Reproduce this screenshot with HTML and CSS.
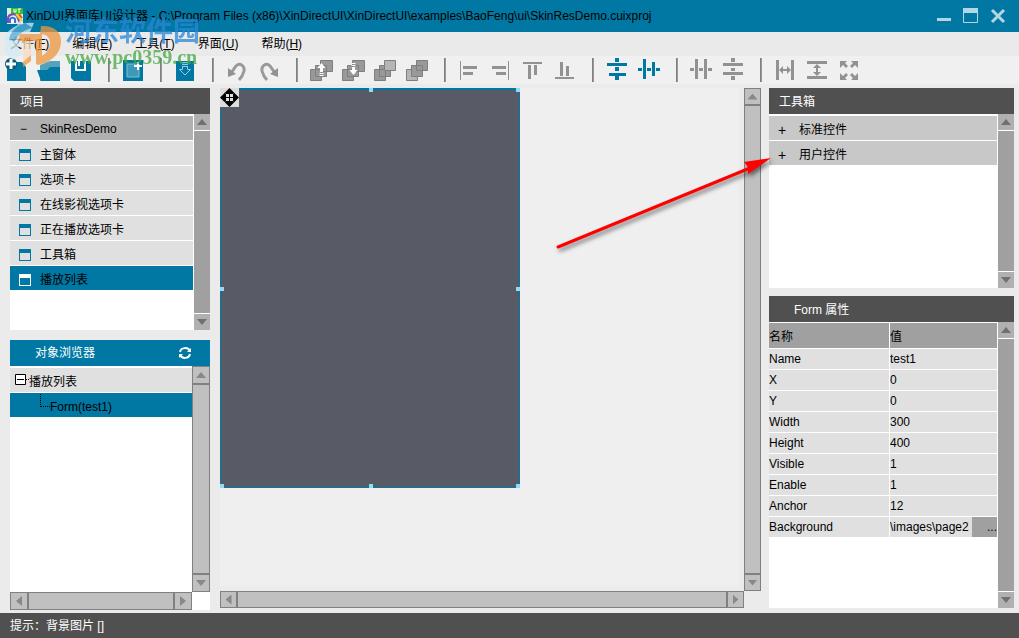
FILE: index.html
```html
<!DOCTYPE html>
<html lang="zh-CN">
<head>
<meta charset="utf-8">
<title>XinDUI界面库UI设计器</title>
<link rel="stylesheet" href="styles.css">
</head>
<body>
<div class="app">
  <header class="titlebar">
    <svg class="app-icon" width="16" height="16" viewBox="0 0 16 16" aria-hidden="true">
      <rect width="16" height="16" fill="#dff0d8"/><rect x="4" width="12" height="6" fill="#2fc22f"/>
      <path d="M7 1v3h2V1M12 1v4M11 1h3" stroke="#fff" fill="none"/>
      <path d="M1 15V10a5 4 0 0 1 9-2l3 7" stroke="#8a3fc0" stroke-width="2" fill="none"/>
      <path d="M3 15v-4a3 3 0 0 1 5 0v4" stroke="#3a6fe0" stroke-width="2" fill="#fff"/>
      <path d="M9 6l6 7" stroke="#e8d020" stroke-width="2"/><path d="M12 6l3 4" stroke="#e85020" stroke-width="2"/>
    </svg>
    <h1 class="title">XinDUI界面库UI设计器 - C:\Program Files (x86)\XinDirectUI\XinDirectUI\examples\BaoFeng\ui\SkinResDemo.cuixproj</h1>
    <div class="window-buttons">
      <button aria-label="最小化"><svg width="16" height="16"><path d="M1 10h14v3H1z" fill="#b2d7e4"/></svg></button>
      <button aria-label="最大化"><svg width="16" height="16"><path d="M.5.5h14v14H.5z" fill="none" stroke="#b2d7e4"/><path d="M0 0h15v5H0z" fill="#b2d7e4"/></svg></button>
      <button aria-label="关闭"><svg width="16" height="16"><path d="M2 2l12 12M14 2L2 14" stroke="#b2d7e4" stroke-width="3"/></svg></button>
    </div>
  </header>
  <nav class="menubar">
    <button>文件(<u>F</u>)</button><button>编辑(<u>E</u>)</button><button>工具(<u>T</u>)</button><button>界面(<u>U</u>)</button><button>帮助(<u>H</u>)</button>
  </nav>
  <div class="toolbar" role="toolbar" aria-label="工具栏">
    <button aria-label="新建"><svg class="blue" viewBox="0 0 32 28"><path d="M6 6h15l4 5v14H6z"/><circle cx="10" cy="8" r="6" fill="#075a7c"/><path d="M10 3v10M5 8h10" stroke="#fff" stroke-width="3"/></svg></button>
    <button aria-label="打开"><svg class="blue" viewBox="0 0 32 28"><path d="M7 9l10-4h10v20H7z" opacity=".65"/><path d="M4 14h10l3-3h10v14H8z"/></svg></button>
    <button aria-label="保存"><svg class="blue" viewBox="0 0 32 28"><path d="M6 5h20v20H9l-3-3z"/><path d="M11 5v9h9V5" fill="none" stroke="#fff" stroke-width="2"/><path d="M13 5h2v5h-2z" fill="#fff"/></svg></button>
    <span class="sep"></span>
    <button aria-label="新建窗体"><svg class="blue" viewBox="0 0 32 28"><path d="M6 4h20v21H6z"/><path d="M10 8h12v13H10z" fill="#3e98b8" stroke="#86bed0"/><path d="M21 6v8M17 10h8" stroke="#fff" stroke-width="2"/></svg></button>
    <span class="sep"></span>
    <button aria-label="导入"><svg class="blue" viewBox="0 0 32 28"><path d="M7 5h18v20H7z"/><path d="M13 6.500h6M13 8.500h6M13 10.500h6M13.500 10.500v3h-3l5.500 5.500 5.500-5.500h-3v-3" fill="none" stroke="#91cbe0"/></svg></button>
    <span class="sep"></span>
    <button aria-label="撤销"><svg viewBox="0 0 32 28"><path d="M10 17l5-7c4-4 9 0 8 5-1 4-2 6-5 9" fill="none" stroke="#999" stroke-width="3"/><path d="M7 12v9l8-3z"/></svg></button>
    <button aria-label="重做"><svg viewBox="0 0 32 28"><path d="M22 17l-5-7c-4-4-9 0-8 5 1 4 2 6 5 9" fill="none" stroke="#999" stroke-width="3"/><path d="M25 12v9l-8-3z"/></svg></button>
    <span class="sep"></span>
    <button aria-label="上移一层"><svg class="layers" viewBox="0 0 32 28"><path d="M15.500 4.500h12v11h-12zM10.500 9.500h11v11h-11zM5.500 13.500h11v11h-11z"/><path class="light" d="M16.500 7l4 5h-2.500v4h-3v-4h-2.500zM14.500 17h4v1h-4zM14.500 19h4v1h-4z"/></svg></button>
    <button aria-label="下移一层"><svg class="layers" viewBox="0 0 32 28"><path d="M15.500 4.500h12v11h-12zM10.500 9.500h11v11h-11zM5.500 13.500h11v11h-11z"/><path class="light" d="M16.500 19l4-5h-2.500v-3h-3v3h-2.500zM14.500 7h4v1h-4zM14.500 9h4v1h-4z"/></svg></button>
    <button aria-label="置顶"><svg class="layers" viewBox="0 0 32 28"><path d="M5.500 13.500h11v11h-11zM10.500 9.500h11v11h-11z"/><path fill="#b5b5b5" d="M15.500 4.500h11v10h-11z"/></svg></button>
    <button aria-label="置底"><svg class="layers" viewBox="0 0 32 28"><path fill="#b5b5b5" d="M5.500 13.500h11v11h-11z"/><path d="M10.500 9.500h11v11h-11zM15.500 4.500h11v10h-11z"/></svg></button>
    <span class="sep"></span>
    <button aria-label="左对齐"><svg viewBox="0 0 32 28"><path d="M7 5h1v19H7zM10 10h14v3H10zM10 16h10v3H10z"/></svg></button>
    <button aria-label="右对齐"><svg viewBox="0 0 32 28"><path d="M23 5h1v19h-1zM7 10h14v3H7zM11 16h10v3H11z"/></svg></button>
    <button aria-label="顶对齐"><svg viewBox="0 0 32 28"><path d="M6 6h19v2H6zM11 9h3v14h-3zM17 9h3v10h-3z"/></svg></button>
    <button aria-label="底对齐"><svg viewBox="0 0 32 28"><path d="M6 21h19v2H6zM11 6h3v14h-3zM17 10h3v10h-3z"/></svg></button>
    <span class="sep"></span>
    <button aria-label="水平居中"><svg class="blue" viewBox="0 0 32 28"><path d="M6 7h20v3H6zM8 17h17v3H8zM14 2h4v4h-4zM14 11h4v4h-4zM14 20h4v4h-4z"/></svg></button>
    <button aria-label="垂直居中"><svg class="blue" viewBox="0 0 32 28"><path d="M10 3h3v20h-3zM19 6h3v14h-3zM5 12h4v3H5zM14 12h4v3h-4zM23 12h4v3h-4z"/></svg></button>
    <span class="sep"></span>
    <button aria-label="水平等距"><svg viewBox="0 0 32 28"><path d="M10 3h3v20h-3zM19 3h3v20h-3zM5 12h4v3H5zM14 12h4v3h-4zM23 12h4v3h-4z"/></svg></button>
    <button aria-label="垂直等距"><svg viewBox="0 0 32 28"><path d="M6 7h20v3H6zM6 16h20v3H6zM14 2h4v4h-4zM14 12h4v3h-4zM14 20h4v4h-4z"/></svg></button>
    <span class="sep"></span>
    <button aria-label="等宽"><svg viewBox="0 0 32 28"><path d="M7 4h3v20H7zM22 4h3v20h-3zM10 14l4-4v3h4v-3l4 4-4 4v-3h-4v3z"/></svg></button>
    <button aria-label="等高"><svg viewBox="0 0 32 28"><path d="M6 5h20v3H6zM6 20h20v3H6zM16 8l4 4h-3v4h3l-4 4-4-4h3v-4h-3z"/></svg></button>
    <button aria-label="等大小"><svg viewBox="0 0 32 28"><path d="M7 5h7l-2 2 3 3-2 2-3-3-3 3zM25 5h-7l2 2-3 3 2 2 3-3 3 3zM7 24h7l-2-2 3-3-2-2-3 3-3-3zM25 24h-7l2-2-3-3 2-2 3 3 3-3z"/></svg></button>
  </div>

  <main class="workspace">
    <div class="column left">
      <section class="panel project">
        <h2 class="panel-head">项目</h2>
        <div class="panel-body">
          <ul class="list">
            <li class="root"><span class="mark">−</span>SkinResDemo</li>
            <li><i class="win"></i>主窗体</li>
            <li><i class="win"></i>选项卡</li>
            <li><i class="win"></i>在线影视选项卡</li>
            <li><i class="win"></i>正在播放选项卡</li>
            <li><i class="win"></i>工具箱</li>
            <li class="selected"><i class="win"></i>播放列表</li>
          </ul>
          <div class="flatbar"><button class="up" aria-label="向上"></button><span class="track"></span><button class="down" aria-label="向下"></button></div>
        </div>
      </section>
      <section class="panel objects">
        <h2 class="panel-head indent active">对象浏览器
          <button class="refresh" aria-label="刷新"><svg width="14" height="14" viewBox="0 0 14 14"><path d="M2 6c1-5 8-5 10-1M12 8c-1 5-8 5-10 1" fill="none" stroke="#fff" stroke-width="2"/><path d="M13 2v4H9zM1 12V8h4z" fill="#fff"/></svg></button>
        </h2>
        <div class="scroll-grid">
          <ul class="list tree">
            <li><svg width="19" height="24" aria-hidden="true"><path d="M5.500 6.500h10v10h-10z" fill="#fff" stroke="#000"/><path d="M7 11.500h7" stroke="#000"/><path d="M16 11.500h3" stroke="#000" stroke-dasharray="1"/></svg>播放列表</li>
            <li class="selected"><svg width="40" height="24" aria-hidden="true"><path d="M30.500 1v13M31 13.500h9" fill="none" stroke="#000" stroke-dasharray="1"/></svg>Form(test1)</li>
          </ul>
          <div class="bar vertical"><button class="up" aria-label="向上"></button><span class="thumb"></span><button class="down" aria-label="向下"></button></div>
          <div class="bar horizontal"><button class="prev" aria-label="向左"></button><span class="thumb"></span><button class="next" aria-label="向右"></button></div>
        </div>
      </section>
    </div>

    <section class="scroll-grid editor" aria-label="编辑区">
      <div class="canvas">
        <div class="form">
          <svg class="mover" width="19" height="19" viewBox="0 0 19 19"><path d="M0 0h19v19H0z" fill="#ddd"/><path d="M9.500 0l5 5h-10zM9.500 19l5-5h-10zM0 9.500l5-5v10zM19 9.500l-5-5v10z"/><path d="M5.500 5.500h8v8h-8zM9.500 4v11M4 9.500h11" fill="none" stroke="#000"/></svg>
          <i class="grip n"></i><i class="grip ne"></i><i class="grip w"></i><i class="grip e"></i><i class="grip sw"></i><i class="grip s"></i><i class="grip se"></i>
        </div>
      </div>
      <div class="bar vertical"><button class="up" aria-label="向上"></button><span class="thumb"></span><button class="down" aria-label="向下"></button></div>
      <div class="bar horizontal"><button class="prev" aria-label="向左"></button><span class="thumb"></span><button class="next" aria-label="向右"></button></div>
    </section>

    <div class="column right">
      <section class="panel toolbox">
        <h2 class="panel-head">工具箱</h2>
        <div class="panel-body">
          <ul class="list groups">
            <li><span class="mark">+</span>标准控件</li>
            <li><span class="mark">+</span>用户控件</li>
          </ul>
          <div class="flatbar"><button class="up" aria-label="向上"></button><span class="track"></span><button class="down" aria-label="向下"></button></div>
        </div>
      </section>
      <section class="panel properties">
        <h2 class="panel-head indent">Form 属性</h2>
        <div class="panel-body">
          <div class="table-area">
            <table>
              <thead><tr><th>名称</th><th>值</th></tr></thead>
              <tbody>
                <tr><td>Name</td><td>test1</td></tr>
                <tr><td>X</td><td>0</td></tr>
                <tr><td>Y</td><td>0</td></tr>
                <tr><td>Width</td><td>300</td></tr>
                <tr><td>Height</td><td>400</td></tr>
                <tr><td>Visible</td><td>1</td></tr>
                <tr><td>Enable</td><td>1</td></tr>
                <tr><td>Anchor</td><td>12</td></tr>
                <tr><td>Background</td><td><div class="file-cell"><span>\images\page2</span><button aria-label="浏览">...</button></div></td></tr>
              </tbody>
            </table>
          </div>
          <div class="flatbar"><button class="up" aria-label="向上"></button><span class="track"></span><button class="down" aria-label="向下"></button></div>
        </div>
      </section>
    </div>
  </main>
  <footer class="status">提示：背景图片 []</footer>

  <div class="watermark" aria-hidden="true">
    <svg width="60" height="48" viewBox="0 0 60 48">
      <path d="M29 3A27 21 0 0 0 8 40L17 34A17 14 0 0 1 25 12z" fill="#d5ebf5"/>
      <path d="M4 20A25 20 0 0 1 20 3l8 5c-8 1-15 6-18 13z" fill="#55abd5"/>
      <path d="M36 6c13-1 21 6 20 17-1 12-11 20-24 22l-1-7c9-2 14-8 14-15 0-6-4-9-10-9z" fill="#ee963f"/>
      <path d="M15 14h22v27l-6 3V21h-5v20l-8 6V21h-5z" fill="#ee963f"/>
      <path d="M18 21h8v14l-8 7z" fill="#f8dcc0"/>
      <path d="M15 0l-3 5 7-1z" fill="#d9eef8"/>
    </svg>
    <div class="watermark-text"><span class="wm-name">河东软件园</span><span class="wm-url">www.pc0359.cn</span></div>
  </div>
  <svg class="pointer" width="230" height="110" viewBox="0 0 230 110" aria-hidden="true">
    <path d="M8 97L200 18" stroke="#f00" stroke-width="3" stroke-linecap="round"/><path d="M221 8l-27 4 4 5v7z" fill="#f00"/>
  </svg>
</div>
</body>
</html>
```
FILE: styles.css
```css
* { box-sizing: border-box; }
body {
  margin: 0;
  font: 12px/16px "Liberation Sans", "Noto Sans CJK SC", sans-serif;
  color: #000;
}
button { margin: 0; padding: 0; border: 0; background: none; color: inherit; font: inherit; }
h1, h2, ul { margin: 0; padding: 0; font: inherit; list-style: none; }
.app { position: relative; display: flex; flex-direction: column; height: 100vh; overflow: hidden; background: #ebebeb; }

.titlebar { display: flex; align-items: center; height: 32px; padding: 0 13px 0 7px; background: #0078a3; flex: none; }
.title { flex: 1; margin-left: 3px; white-space: nowrap; overflow: hidden; }
.window-buttons { display: flex; gap: 11px; }
.window-buttons svg { display: block; }

.menubar { display: flex; gap: 23px; height: 24px; padding-left: 10px; background: #eaeaea; flex: none; }

.toolbar { display: flex; height: 28px; padding-left: 1px; background: #f0f0f0; flex: none; }
.toolbar button { width: 32px; height: 28px; flex: none; }
.toolbar svg { display: block; width: 32px; height: 28px; fill: #929292; }
.toolbar .blue { fill: #0078a3; }
.toolbar .layers { fill: #999; stroke: #7f7f7f; }
.toolbar .light { fill: #fff; stroke: none; }
.sep { flex: none; width: 2px; margin: 2px 7px 2px 11px; background: #999; border-left: 1px solid #808080; }

.workspace { flex: 1; min-height: 0; display: grid; grid-template-columns: 200px 1fr 253px; padding: 4px 5px 3px 10px; }
.column { display: flex; flex-direction: column; min-height: 0; }
.left { gap: 10px; }
.right { gap: 8px; margin-left: 8px; padding-bottom: 2px; }
.panel { display: flex; flex-direction: column; background: #fff; }
.project { height: 242px; }
.toolbox { height: 200px; }
.objects, .properties { flex: 1; min-height: 0; }
.panel-head { display: flex; align-items: center; justify-content: space-between; flex: none; height: 26px; padding: 2px 18px 0 10px; background: #505050; color: #fff; }
.panel-head.indent { padding-left: 25px; }
.panel-head.active { padding-top: 0; background: #0078a3; }
.refresh, .refresh svg { display: block; }
.panel-body { flex: 1; min-height: 0; display: flex; }

.list { flex: 1; min-width: 0; display: flex; flex-direction: column; gap: 1px; padding: 2px 1px 0 0; background: #fff; }
.list li { display: flex; align-items: center; height: 24px; padding-top: 3px; background: #e0e0e0; }
.list .root { padding-top: 2px; background: #b0b0b0; }
.list .selected { background: #0078a3; }
.groups li { background: #c8c8c8; }
.mark { width: 30px; padding-left: 10px; flex: none; }
.groups .mark { font-size: 14px; padding-left: 9px; }
.win { width: 12px; height: 12px; margin: 0 9px; border: 1px solid #0078a3; border-top-width: 4px; flex: none; }
.selected .win { border-color: #fff; }
.tree { padding-right: 0; }
.tree svg { margin-top: -3px; flex: none; }

.up::before, .down::before, .prev::before, .next::before { content: ""; display: block; width: 10px; height: 6px; margin: auto; background: #707070; }
.up::before { clip-path: polygon(50% 0, 100% 100%, 0 100%); }
.down::before { clip-path: polygon(0 0, 100% 0, 50% 100%); }
.bar button::before { background: #888; }
.bar .prev::before, .bar .next::before { width: 6px; height: 10px; }
.prev::before { clip-path: polygon(0 50%, 100% 0, 100% 100%); }
.next::before { clip-path: polygon(0 0, 100% 50%, 0 100%); }

.flatbar { display: flex; flex-direction: column; gap: 1px; width: 16px; flex: none; }
.flatbar button { height: 16px; background: #b0b0b0; }
.track { flex: 1; background: #a0a0a0; }

.scroll-grid { flex: 1; min-height: 0; display: grid; grid-template: 1fr 18px / 1fr 18px; }
.bar { display: flex; }
.vertical { flex-direction: column; }
.bar button, .thumb { border: 1px solid #808080; background: #c0c0c0; }
.bar button { flex: none; width: 18px; height: 18px; }
.thumb { flex: 1; }

.editor { grid-template: 1fr 17px / 1fr 17px; margin-left: 10px; padding-bottom: 2px; }
.editor .bar button { width: 17px; height: 17px; }
.canvas { margin: 0 5px 5px 0; background: #efefef; overflow: hidden; }
.form { position: relative; width: 300px; height: 400px; border: 1px solid #0078a3; border-top-width: 2px; background: #585b66; }
.mover { position: absolute; top: -2px; left: -1px; }
.grip { position: absolute; width: 4px; height: 4px; background: #8fdcf8; }
.n { top: -2px; left: calc(50% - 1px); }
.ne { top: -2px; right: -1px; }
.w { top: calc(50% - 2px); left: -1px; }
.e { top: calc(50% - 2px); right: -1px; }
.sw { bottom: -1px; left: -1px; }
.s { bottom: -1px; left: calc(50% - 1px); }
.se { bottom: -1px; right: -1px; }

.table-area { flex: 1; min-width: 0; }
table { width: 100%; table-layout: fixed; border-collapse: separate; border-spacing: 0; }
th, td { height: 21px; padding: 0; border: 0 solid #fff; border-width: 0 1px 1px 0; background: #e0e0e0; font-weight: normal; text-align: left; line-height: 20px; white-space: nowrap; overflow: hidden; }
th { height: 27px; border-top-width: 1px; padding-top: 2px; background: #a0a0a0; }
th:first-child { width: 121px; }
.file-cell { display: flex; height: 20px; }
.file-cell span { flex: 1; min-width: 0; overflow: hidden; }
.file-cell button { width: 25px; background: #a0a0a0; text-align: right; }

.status { flex: none; height: 25px; padding: 5px 10px; background: #505050; color: #fff; }

.watermark { position: absolute; top: 20px; left: 5px; display: flex; opacity: .75; pointer-events: none; }
.watermark-text { display: flex; flex-direction: column; font-family: "Liberation Serif", "Noto Sans CJK SC", serif; font-weight: bold; white-space: nowrap; }
.wm-name { font-size: 27px; line-height: 24px; color: #2b87d8; }
.wm-url { margin-top: 2px; font-size: 20px; line-height: 22px; color: #45a845; }
.pointer { position: absolute; top: 150px; left: 550px; pointer-events: none; filter: drop-shadow(2px 3px 2px rgba(0, 0, 0, .5)); }
```
